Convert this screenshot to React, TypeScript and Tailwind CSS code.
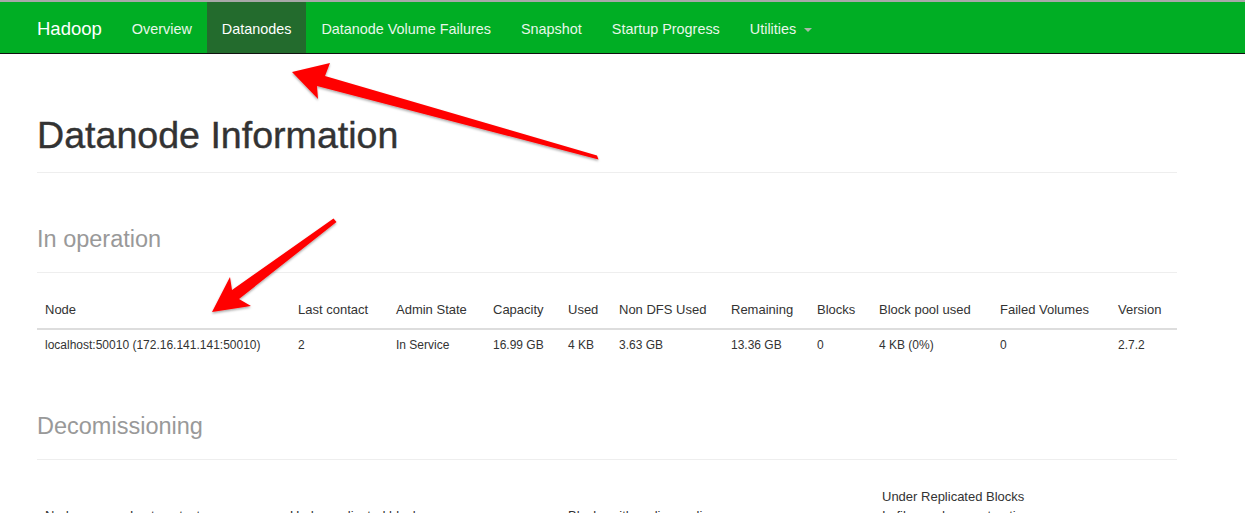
import React from "react";

const navItems = [
  { key: "overview", label: "Overview" },
  { key: "datanodes", label: "Datanodes", active: true },
  { key: "failures", label: "Datanode Volume Failures" },
  { key: "snapshot", label: "Snapshot" },
  { key: "startup", label: "Startup Progress" },
];

const liveCols = [
  { label: "Node", w: "w-[253px]" },
  { label: "Last contact", w: "w-[98px]" },
  { label: "Admin State", w: "w-[97px]" },
  { label: "Capacity", w: "w-[75px]" },
  { label: "Used", w: "w-[51px]" },
  { label: "Non DFS Used", w: "w-[112px]" },
  { label: "Remaining", w: "w-[86px]" },
  { label: "Blocks", w: "w-[62px]" },
  { label: "Block pool used", w: "w-[121px]" },
  { label: "Failed Volumes", w: "w-[118px]" },
  { label: "Version", w: "w-[67px]" },
];

const liveRow = [
  "localhost:50010 (172.16.141.141:50010)",
  "2",
  "In Service",
  "16.99 GB",
  "4 KB",
  "3.63 GB",
  "13.36 GB",
  "0",
  "4 KB (0%)",
  "0",
  "2.7.2",
];

const Arrows = () => (
  <svg
    className="absolute left-0 top-0 pointer-events-none"
    width="1245"
    height="513"
    viewBox="0 0 1245 513"
  >
    <defs>
      <filter id="shadow" x="-10%" y="-10%" width="120%" height="130%">
        <feDropShadow dx="0" dy="1.5" stdDeviation="1.2" floodColor="#000" floodOpacity="0.35" />
      </filter>
    </defs>
    {/* arrow pointing at the Datanodes tab */}
    <polygon
      filter="url(#shadow)"
      fill="#ff0000"
      points="292,72 330,63 325,76 597,155.5 598.5,159.5 317,86 318,99"
    />
    {/* arrow pointing at the node row */}
    <polygon
      filter="url(#shadow)"
      fill="#ff0000"
      points="212,312 230,277 232,290 333.5,218.5 336.5,222 239,299 251,306"
    />
  </svg>
);

const App = () => {
  return (
    <div className="relative h-[513px] w-[1245px] overflow-hidden bg-white font-['Liberation_Sans',Arial,sans-serif] text-[#333]">
      {/* Navbar */}
      <div className="border-t-2 border-[#a8a8a8]">
        <nav className="flex h-[52px] items-stretch border-b border-[#111] bg-[#00ae24] pl-[37px]">
          <span className="flex items-center pr-[15px] pt-[3px] text-[18.5px] leading-5 text-white">Hadoop</span>
          <ul className="flex items-stretch">
            {navItems.map((item) => (
              <li
                key={item.key}
                className={`flex items-center px-[15px] pt-[3px] text-[14.4px] leading-5 ${
                  item.active ? "bg-[#236b2d] text-white" : "text-[#e9f6ea]"
                }`}
              >
                {item.label}
              </li>
            ))}
            <li className="flex items-center px-[15px] pt-[3px] text-[14.4px] leading-5 text-[#e9f6ea]">
              Utilities
              <span className="ml-[8px] mt-[1px] h-0 w-0 border-x-[4px] border-t-[4px] border-x-transparent border-t-[#a9b9a9]" />
            </li>
          </ul>
        </nav>
      </div>

      <div className="ml-[37px] w-[1140px]">
        {/* Page header */}
        <div className="mt-[61px] border-b border-[#eee] pb-[16px]">
          <h1 className="text-[37.6px] leading-[1.1] [-webkit-text-stroke:0.4px_#333]">Datanode Information</h1>
        </div>

        <div className="mt-[54px] border-b border-[#eee] pb-[19px]">
          <h2 className="text-[23.5px] leading-[1.1] text-[#999]">In operation</h2>
        </div>

        <table className="mt-[20px] w-full table-fixed text-[13px] leading-[18.6px]">
          <thead>
            <tr className="border-b-2 border-[#ddd]">
              {liveCols.map((c) => (
                <th key={c.label} className={`${c.w} p-2 text-left align-bottom font-normal`}>
                  {c.label}
                </th>
              ))}
            </tr>
          </thead>
          <tbody>
            <tr>
              {liveRow.map((v, i) => (
                <td key={i} className="px-2 pt-[6px] pb-[10px] text-[12px] whitespace-nowrap">
                  {v}
                </td>
              ))}
            </tr>
          </tbody>
        </table>

        <div className="mt-[50px] border-b border-[#eee] pb-[19px]">
          <h2 className="text-[23.5px] leading-[1.1] text-[#999]">Decomissioning</h2>
        </div>

        <table className="mt-[20px] w-full table-fixed text-[13px] leading-[18.6px]">
          <thead>
            <tr className="border-b-2 border-[#ddd]">
              <th className="w-[85px] p-2 text-left align-bottom font-normal">Node</th>
              <th className="w-[160px] p-2 text-left align-bottom font-normal">Last contact</th>
              <th className="w-[278px] p-2 text-left align-bottom font-normal">Under replicated blocks</th>
              <th className="w-[314px] p-2 text-left align-bottom font-normal">Blocks with no live replicas</th>
              <th className="p-2 text-left align-bottom font-normal">
                Under Replicated Blocks
                <br />
                In files under construction
              </th>
            </tr>
          </thead>
        </table>
      </div>

      <Arrows />
    </div>
  );
};

export default App;
